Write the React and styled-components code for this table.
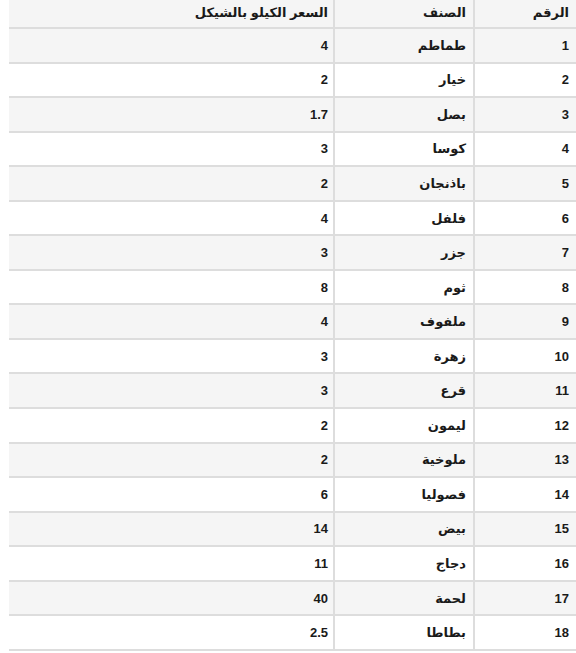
import React from "react";
import styled, { createGlobalStyle } from "styled-components";

const GlobalStyle = createGlobalStyle`
  html, body {
    margin: 0;
    padding: 0;
    background: #ffffff;
  }
  body {
    font-family: "Liberation Sans", "DejaVu Sans", Arial, sans-serif;
    color: #1a1a1a;
  }
`;

const Table = styled.div`
  direction: rtl;
  margin-left: 9px;
  width: 567px;
  display: flex;
  flex-direction: column;
`;

const Row = styled.div`
  display: grid;
  grid-template-columns: 103px 140px 1fr;
  height: ${(p) => (p.$head ? "29px" : "34.56px")};
  box-sizing: border-box;
  border-bottom: 2px solid #dddddd;
  background: ${(p) => (p.$shaded ? "#f5f5f5" : "#ffffff")};
`;

const Cell = styled.div`
  display: flex;
  align-items: center;
  justify-content: flex-start;
  padding: ${(p) => (p.$head ? "0 7px 3px 7px" : "0 7px")};
  padding-right: ${(p) => (p.$last ? "5px" : "7px")};
  box-sizing: border-box;
  font-size: 13px;
  font-weight: bold;
  color: #1a1a1a;
  white-space: nowrap;
  border-left: ${(p) => (p.$last ? "none" : "2px solid #dddddd")};
`;

const items = [
  ["1", "طماطم", "4"],
  ["2", "خيار", "2"],
  ["3", "بصل", "1.7"],
  ["4", "كوسا", "3"],
  ["5", "باذنجان", "2"],
  ["6", "فلفل", "4"],
  ["7", "جزر", "3"],
  ["8", "ثوم", "8"],
  ["9", "ملفوف", "4"],
  ["10", "زهرة", "3"],
  ["11", "قرع", "3"],
  ["12", "ليمون", "2"],
  ["13", "ملوخية", "2"],
  ["14", "فصوليا", "6"],
  ["15", "بيض", "14"],
  ["16", "دجاج", "11"],
  ["17", "لحمة", "40"],
  ["18", "بطاطا", "2.5"],
];

export default function App() {
  return (
    <>
      <GlobalStyle />
      <Table>
        <Row $head $shaded>
          <Cell $head>الرقم</Cell>
          <Cell $head>الصنف</Cell>
          <Cell $head $last>السعر الكيلو بالشيكل</Cell>
        </Row>
        {items.map(([n, name, price], i) => (
          <Row key={n} $shaded={i % 2 === 0}>
            <Cell>{n}</Cell>
            <Cell>{name}</Cell>
            <Cell $last>{price}</Cell>
          </Row>
        ))}
      </Table>
    </>
  );
}
